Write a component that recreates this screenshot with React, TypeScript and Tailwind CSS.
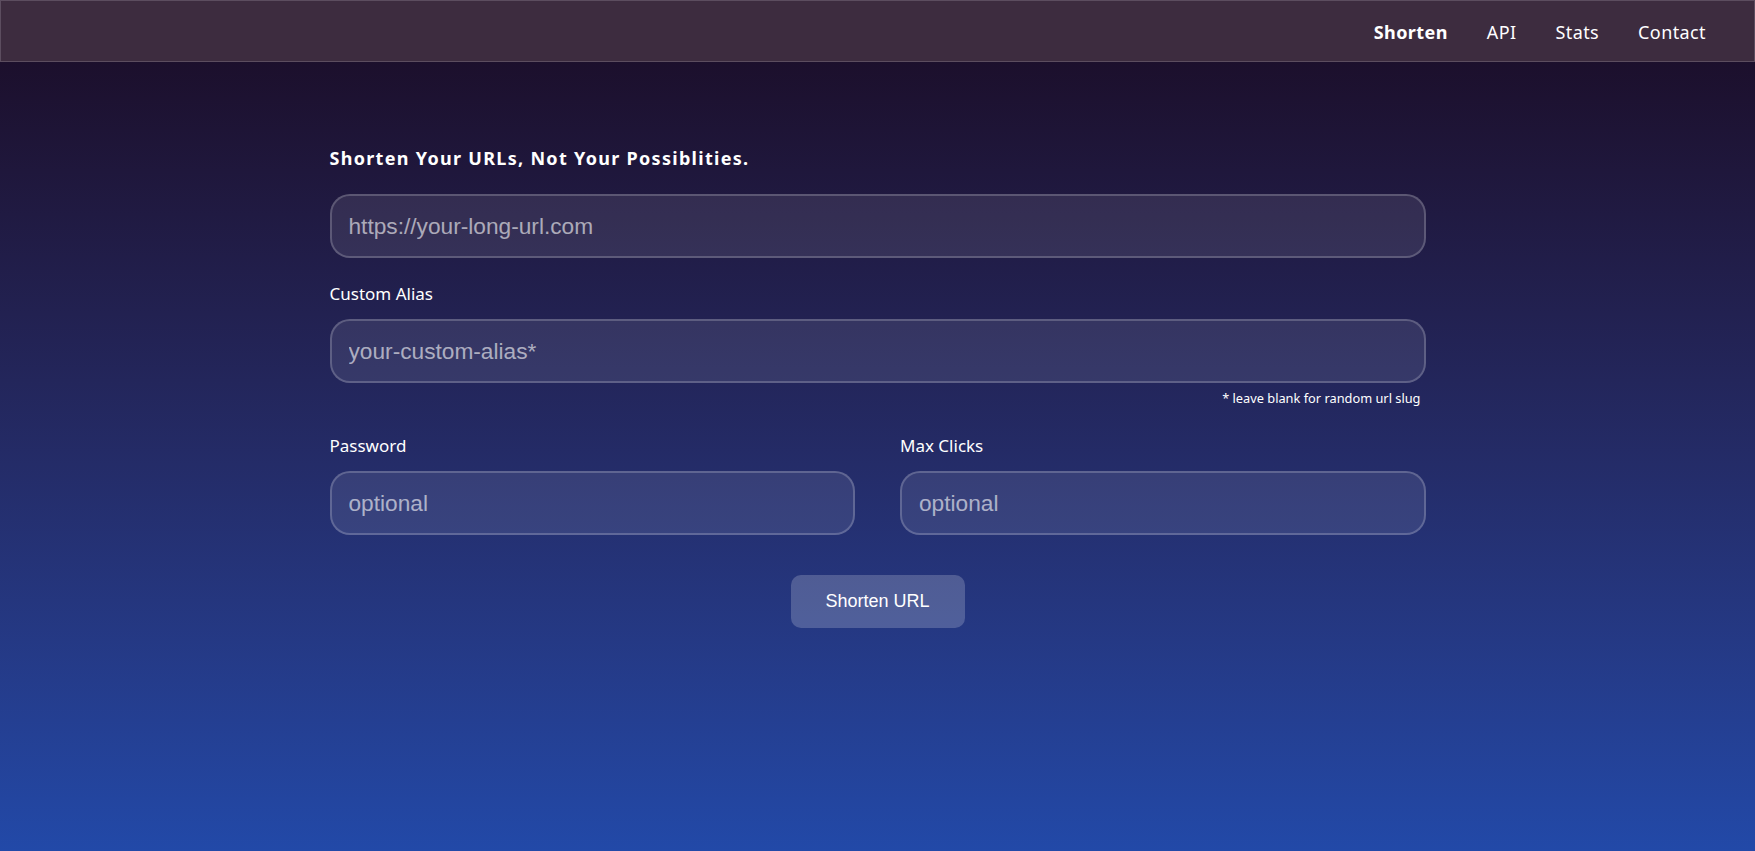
import React from 'react'

const navItems = ['Shorten', 'API', 'Stats', 'Contact']

function Field({ label, placeholder }: { label?: string; placeholder: string }) {
  return (
    <div className="flex flex-col">
      {label && (
        <label className="text-[17px] leading-[24px] text-white mb-[13px]">
          {label}
        </label>
      )}
      <input
        type="text"
        placeholder={placeholder}
        className="h-[64px] w-full rounded-[20px] border-2 border-white/20 bg-white/[0.09] pl-[17px] pr-4 text-[22.7px] text-white placeholder:text-white/60 outline-none font-['Liberation_Sans',Arial,sans-serif]"
      />
    </div>
  )
}

export default function App() {
  return (
    <div className="min-h-screen bg-gradient-to-b from-[#1a0b24] to-[#2249a8] font-['Noto_Sans',sans-serif]">
      {/* Top nav */}
      <header className="h-[62px] border border-[#5c4d5f] bg-[#3d2c3f] flex items-center justify-end pr-[48px] pt-[2px]">
        <nav className="flex items-center gap-[39px]">
          {navItems.map((item, i) => (
            <a
              key={item}
              href="#"
              className={
                'text-[18px] tracking-[0.4px] text-white ' +
                (i === 0 ? 'font-bold' : 'font-normal')
              }
            >
              {item}
            </a>
          ))}
        </nav>
      </header>

      {/* Form */}
      <main className="w-[1096px] mx-auto pt-[84px]">
        <h1 className="text-[18px] leading-[24px] font-bold tracking-[1.3px] text-white mb-[24px]">
          Shorten Your URLs, Not Your Possiblities.
        </h1>

        <Field placeholder="https://your-long-url.com" />

        <div className="mt-[24px]">
          <Field label="Custom Alias" placeholder="your-custom-alias*" />
          <p className="mt-[6px] pr-[5px] text-right text-[12.8px] leading-[18px] text-white">
            * leave blank for random url slug
          </p>
        </div>

        <div className="mt-[27px] grid grid-cols-2 gap-[45px]">
          <Field label="Password" placeholder="optional" />
          <Field label="Max Clicks" placeholder="optional" />
        </div>

        <div className="mt-[40px] flex justify-center">
          <button className="w-[174px] h-[53px] rounded-[10px] bg-white/20 text-[18px] text-white font-['Liberation_Sans',Arial,sans-serif]">
            Shorten URL
          </button>
        </div>
      </main>
    </div>
  )
}
